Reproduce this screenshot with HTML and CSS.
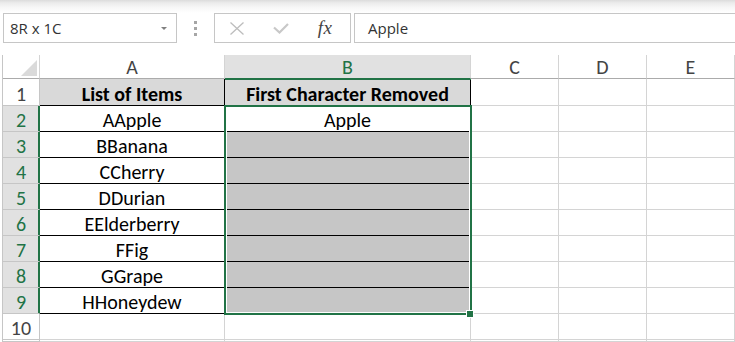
FILE: index.html
```html
<!DOCTYPE html>
<html>
<head>
<meta charset="utf-8">
<link rel="stylesheet" href="styles.css">
</head>
<body>
<div class="topshade"></div>
<div class="formula-row">
  <div class="namebox"><span>8R x 1C</span><span class="caret"></span></div>
  <div class="grip"><i></i><i></i><i></i></div>
  <div class="fbuttons">
    <span class="slot"><svg width="16" height="13" viewBox="0 0 16 13"><path d="M1.5 0.5 L14.5 12.5 M14.5 0.5 L1.5 12.5" stroke="#bdbdbd" stroke-width="1.3" fill="none"/></svg></span>
    <span class="slot"><svg width="16" height="11" viewBox="0 0 16 11"><path d="M1 4.5 L6.5 9.5 L15 1" stroke="#c8c8c8" stroke-width="2.2" fill="none"/></svg></span>
    <span class="slot fx">fx</span>
  </div>
  <div class="fbar">Apple</div>
</div>
<div class="sheet">
  <div class="grid">
    <div class="c h corner"><span class="tri"></span></div>
    <div class="c h">A</div>
    <div class="c h sel">B</div>
    <div class="c h">C</div>
    <div class="c h">D</div>
    <div class="c h">E</div>
    <div class="c h"></div>

    <div class="c r">1</div>
    <div class="c t th">List of Items</div>
    <div class="c t th">First Character Removed</div>
    <div class="c"></div><div class="c"></div><div class="c"></div><div class="c"></div>

    <div class="c r sel">2</div>
    <div class="c t">AApple</div>
    <div class="c t">Apple</div>
    <div class="c"></div><div class="c"></div><div class="c"></div><div class="c"></div>

    <div class="c r sel">3</div>
    <div class="c t">BBanana</div>
    <div class="c t hl"></div>
    <div class="c"></div><div class="c"></div><div class="c"></div><div class="c"></div>

    <div class="c r sel">4</div>
    <div class="c t">CCherry</div>
    <div class="c t hl"></div>
    <div class="c"></div><div class="c"></div><div class="c"></div><div class="c"></div>

    <div class="c r sel">5</div>
    <div class="c t">DDurian</div>
    <div class="c t hl"></div>
    <div class="c"></div><div class="c"></div><div class="c"></div><div class="c"></div>

    <div class="c r sel">6</div>
    <div class="c t">EElderberry</div>
    <div class="c t hl"></div>
    <div class="c"></div><div class="c"></div><div class="c"></div><div class="c"></div>

    <div class="c r sel">7</div>
    <div class="c t">FFig</div>
    <div class="c t hl"></div>
    <div class="c"></div><div class="c"></div><div class="c"></div><div class="c"></div>

    <div class="c r sel">8</div>
    <div class="c t">GGrape</div>
    <div class="c t hl"></div>
    <div class="c"></div><div class="c"></div><div class="c"></div><div class="c"></div>

    <div class="c r sel">9</div>
    <div class="c t">HHoneydew</div>
    <div class="c t hl"></div>
    <div class="c"></div><div class="c"></div><div class="c"></div><div class="c"></div>

    <div class="c r">10</div>
    <div class="c"></div><div class="c"></div>
    <div class="c"></div><div class="c"></div><div class="c"></div><div class="c"></div>

    <div class="c r"></div>
    <div class="c"></div><div class="c"></div>
    <div class="c"></div><div class="c"></div><div class="c"></div><div class="c"></div>
  </div>
  <div class="selection"></div>
  <div class="handle"></div>
</div>
</body>
</html>
```

FILE: styles.css
```css
* { box-sizing: border-box; }
html, body { margin: 0; padding: 0; background: #fff; }
body {
  width: 735px;
  height: 342px;
  overflow: hidden;
  font-family: "Open Sans", "Noto Sans", sans-serif;
}
.topshade {
  height: 13px;
  background: linear-gradient(#dcdcdc 0, #ececec 3px, #f8f8f8 8px, #fff 13px);
}
.formula-row {
  display: flex;
  height: 30px;
}
.namebox {
  margin-left: 3px;
  width: 174px;
  border: 1px solid #c6c6c6;
  display: flex;
  align-items: center;
  justify-content: space-between;
  padding: 0 9px 0 6px;
  font-size: 15px;
  color: #333;
}
.caret {
  width: 0;
  height: 0;
  border-left: 3px solid transparent;
  border-right: 3px solid transparent;
  border-top: 3px solid #808080;
}
.grip {
  width: 37px;
  display: flex;
  flex-direction: column;
  align-items: center;
  justify-content: center;
  gap: 3px;
}
.grip i {
  display: block;
  width: 3px;
  height: 3px;
  background: #a6a6a6;
}
.fbuttons {
  width: 137px;
  border: 1px solid #c6c6c6;
  display: flex;
  align-items: center;
}
.slot {
  width: 44px;
  display: flex;
  justify-content: center;
  align-items: center;
}
.fx {
  font-family: "Liberation Serif", "DejaVu Serif", serif;
  font-style: italic;
  font-size: 19px;
  color: #444;
  letter-spacing: 0.5px;
}
.fbar {
  margin-left: 3px;
  flex: 1;
  border: 1px solid #c6c6c6;
  border-right: none;
  padding-left: 13px;
  display: flex;
  align-items: center;
  font-size: 15px;
  color: #333;
}
.sheet {
  position: relative;
  margin-top: 12px;
}
.grid {
  margin-left: 2px;
  border-left: 1px solid #c6c6c6;
  display: grid;
  grid-template-columns: 37px 185px 246px 88px 88px 88px 10px;
  grid-template-rows: 24px 27px repeat(8, 26px) 26px 2px;
}
.c {
  border-right: 1px solid #d4d4d4;
  border-bottom: 1px solid #d4d4d4;
  display: flex;
  align-items: flex-end;
  justify-content: center;
  font-family: Carlito, Calibri, "Liberation Sans", sans-serif;
  font-size: 20px;
  line-height: 22px;
  color: #000;
  white-space: nowrap;
}
.h {
  color: #444;
  border-bottom-color: #ababab;
  align-items: flex-start;
  padding-top: 2px;
  line-height: 20px;
}
.h.sel {
  background: #e1e1e1;
  color: #217346;
  border-bottom-color: #217346;
  box-shadow: 0 1px 0 #217346;
  position: relative;
  z-index: 1;
}
.corner {
  position: relative;
}
.tri {
  position: absolute;
  right: 2px;
  bottom: 2px;
  width: 0;
  height: 0;
  border-left: 16px solid transparent;
  border-bottom: 16px solid #dadada;
}
.r {
  color: #444;
  border-right-color: #c6c6c6;
  border-bottom-color: #c6c6c6;
}
.r.sel {
  background: #e1e1e1;
  color: #217346;
  border-right-color: #217346;
  box-shadow: inset -1px 0 0 #217346;
}
.t {
  border-right-color: #000;
  border-bottom-color: #000;
}
.th {
  background: #d9d9d9;
  font-weight: bold;
}
.hl {
  background: #c6c6c6;
}
.selection {
  position: absolute;
  left: 224px;
  top: 50px;
  width: 248px;
  height: 210px;
  border: 2px solid #217346;
  box-shadow: inset 0 0 0 1px #fff;
  pointer-events: none;
}
.handle {
  position: absolute;
  left: 466px;
  top: 255px;
  width: 8px;
  height: 8px;
  background: #217346;
  border: 1px solid #fff;
}
```
